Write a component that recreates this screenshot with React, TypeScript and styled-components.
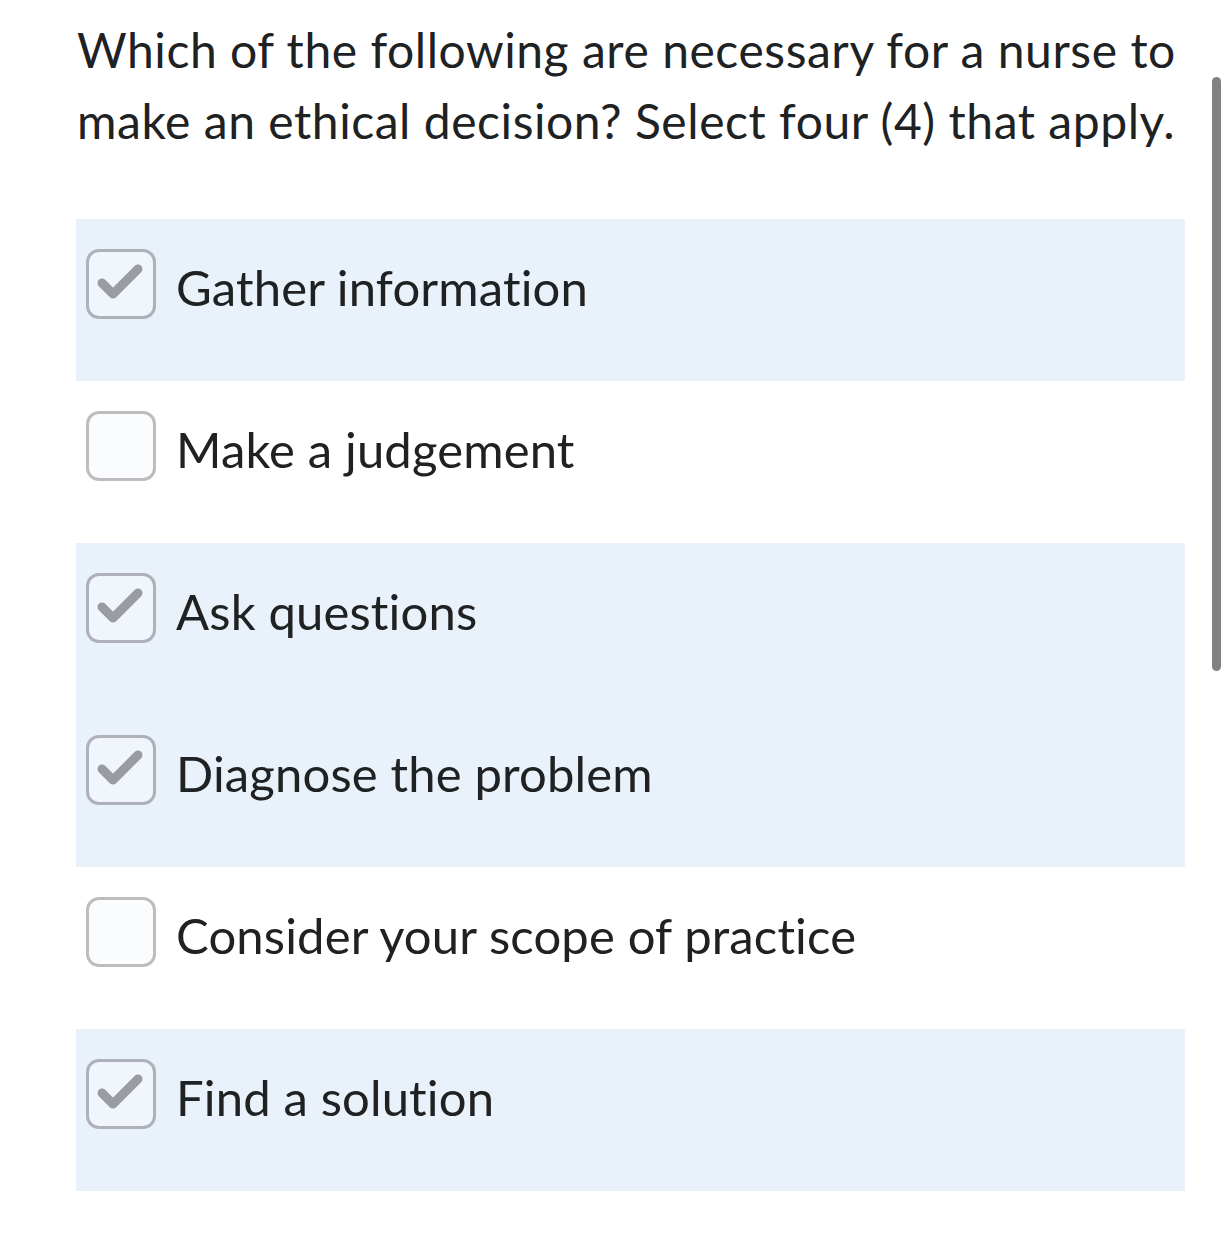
import React from 'react';
import styled, { createGlobalStyle } from 'styled-components';

const GlobalStyle = createGlobalStyle`
  html, body {
    margin: 0;
    padding: 0;
    background: #ffffff;
  }
  body {
    font-family: Lato, "Noto Sans", sans-serif;
    font-variant-ligatures: none;
    color: #202122;
  }
`;

const Page = styled.div`
  position: relative;
  width: 1230px;
  min-height: 1243px;
  padding: 14px 45px 0 76px;
  box-sizing: border-box;
`;

const Question = styled.h1`
  margin: 0 0 63px;
  font-size: 48px;
  font-weight: 400;
  line-height: 71px;
  letter-spacing: 0.55px;
  padding-left: 1px;
  color: #202122;
`;

const OptionList = styled.div`
  display: flex;
  flex-direction: column;
  width: 1109px;
`;

const OptionRow = styled.label<{ $checked: boolean }>`
  display: flex;
  align-items: flex-start;
  gap: 20px;
  height: 162px;
  padding: 30px 0 0 10px;
  box-sizing: border-box;
  background: ${(p) => (p.$checked ? '#e9f1fb' : '#ffffff')};
  cursor: pointer;
`;

const Box = styled.span<{ $checked: boolean }>`
  flex: none;
  width: 70px;
  height: 70px;
  box-sizing: border-box;
  border: 3px solid ${(p) => (p.$checked ? '#aeb1b8' : '#bdbdbf')};
  border-radius: 13px;
  background: ${(p) => (p.$checked ? '#f1f6fd' : '#fbfcfe')};
  display: flex;
  align-items: center;
  justify-content: center;
`;

const Label = styled.span`
  font-size: 49px;
  line-height: 70px;
  letter-spacing: 0.15px;
  margin-top: 3px;
  color: #202122;
`;

const Scrollbar = styled.div`
  position: absolute;
  top: 77px;
  left: 1212px;
  width: 9px;
  height: 594px;
  border-radius: 5px;
  background: #818181;
`;

const CheckMark = () => (
  <svg width="64" height="64" viewBox="0 0 64 64" style={{ display: 'block' }}>
    <path
      d="M13 31 L24 42 L49 17"
      fill="none"
      stroke="#9a9ca4"
      strokeWidth="9"
      strokeLinecap="round"
      strokeLinejoin="round"
    />
  </svg>
);

const options = [
  { text: 'Gather information', checked: true },
  { text: 'Make a judgement', checked: false },
  { text: 'Ask questions', checked: true },
  { text: 'Diagnose the problem', checked: true },
  { text: 'Consider your scope of practice', checked: false },
  { text: 'Find a solution', checked: true },
];

const App: React.FC = () => {
  return (
    <>
      <GlobalStyle />
      <Page>
        <Question>
          Which of the following are necessary for a nurse to make an ethical
          decision? Select four (4) that apply.
        </Question>
        <OptionList>
          {options.map((o) => (
            <OptionRow key={o.text} $checked={o.checked}>
              <Box $checked={o.checked}>{o.checked && <CheckMark />}</Box>
              <Label>{o.text}</Label>
            </OptionRow>
          ))}
        </OptionList>
        <Scrollbar />
      </Page>
    </>
  );
};

export default App;
